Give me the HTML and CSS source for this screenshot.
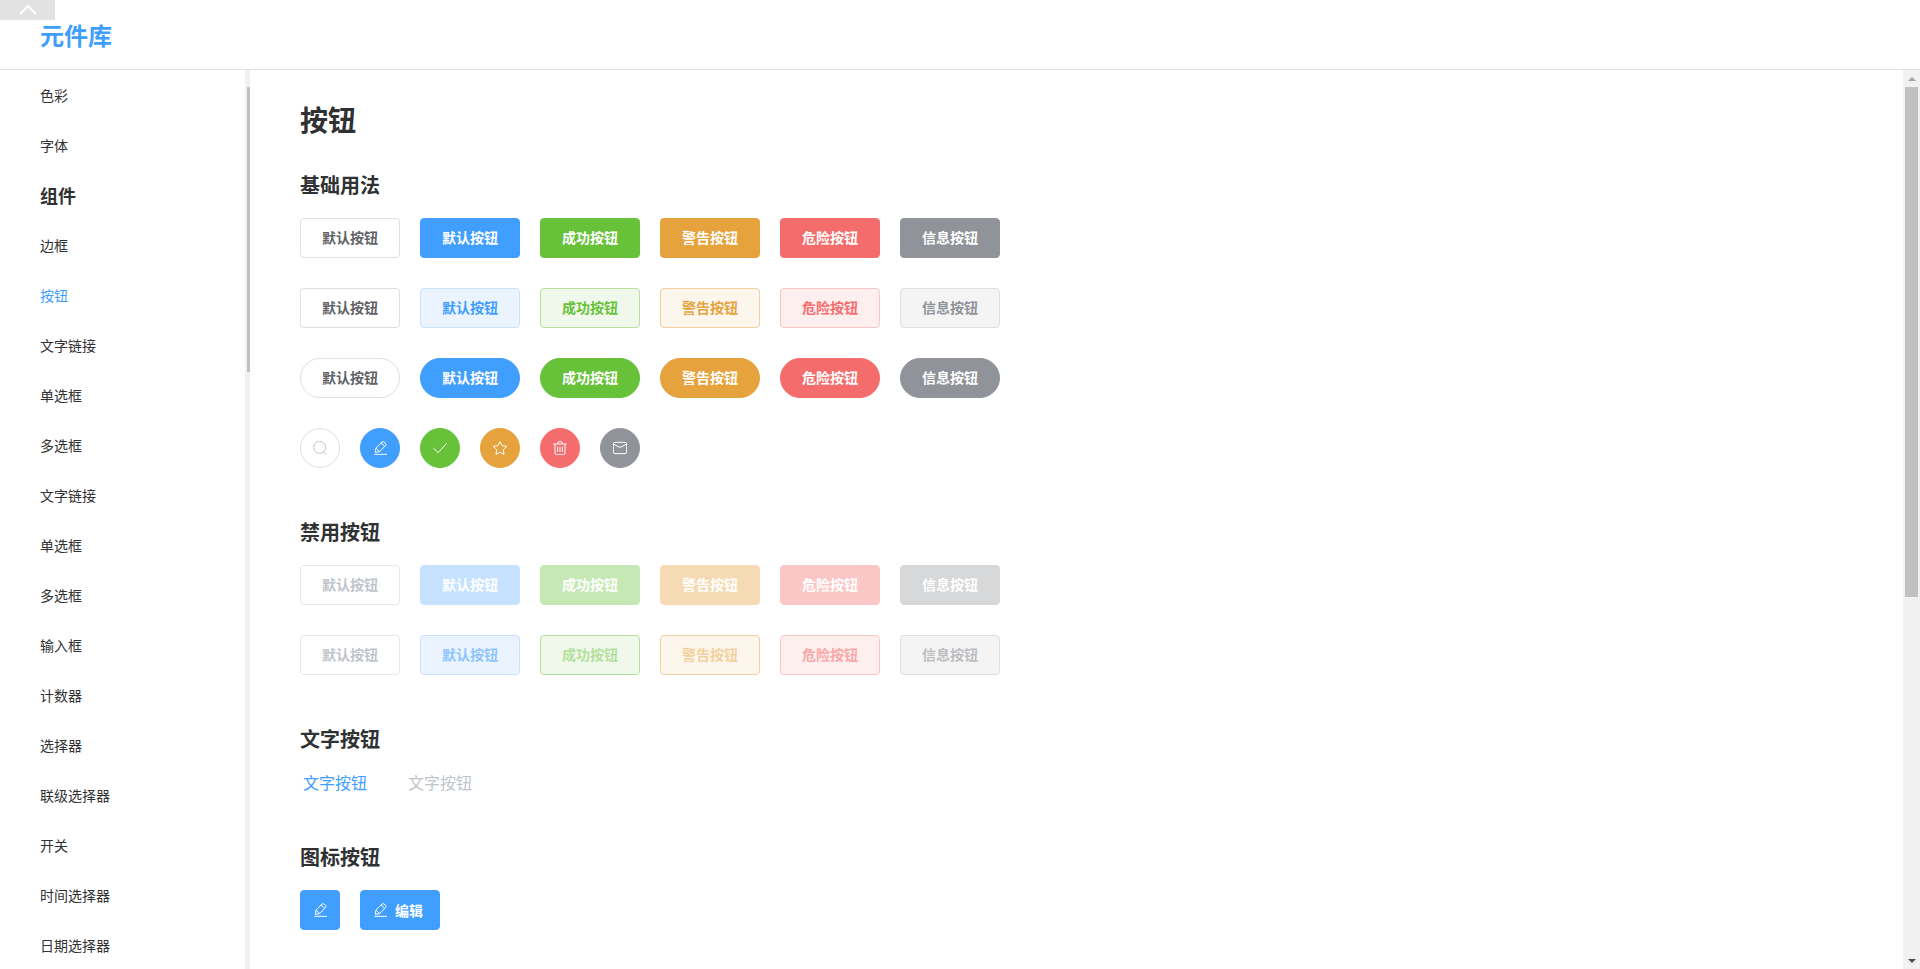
FILE: index.html
```html
<!DOCTYPE html>
<html lang="zh-CN">
  <head>
    <meta charset="UTF-8" />
    <meta name="viewport" content="width=device-width, initial-scale=1.0" />
    <title>元件库</title>
    <link rel="stylesheet" href="styles.css">
  </head>
  <body>
    <svg class="icon-defs" aria-hidden="true">
      <symbol id="icon-search" viewBox="0 0 42 42">
        <circle cx="20" cy="19" r="18" />
        <path d="M33 32l9 9" />
      </symbol>
      <symbol id="icon-edit" viewBox="0 0 42 42">
        <path d="M4 40h38M7 34l2-13L27 3q3-2 6 0l5 4q2 3 0 6L20 32zM9 21l11 11M24 6l11 10" />
      </symbol>
      <symbol id="icon-check" viewBox="0 0 42 42">
        <path d="M1 21l14 14L41 7" />
      </symbol>
      <symbol id="icon-star" viewBox="0 0 42 42">
        <path d="M21 2l6 12 14 2-10 10 2 14-12-6-12 6 2-14L1 16l14-2z" />
      </symbol>
      <symbol id="icon-delete" viewBox="0 0 42 42">
        <path d="M1 9h40M14 9V5q0-3 3-3h8q3 0 3 3v4M6 9v27q0 5 5 5h20q5 0 5-5V9M14 17v16M21 17v16M28 17v16" />
      </symbol>
      <symbol id="icon-message" viewBox="0 0 42 42">
        <rect x="1" y="4" width="40" height="34" rx="5" />
        <path d="M2 9l13 8q6 3 12 0l13-8" />
      </symbol>
    </svg>

    <header class="header">
      <h1 class="logo">元件库</h1>
      <button class="collapse" type="button" aria-label="收起">
        <svg width="18" height="10" viewBox="0 0 18 10"><path d="M1 9l8-8 8 8" /></svg>
      </button>
    </header>

    <div class="layout">
      <aside class="sidebar">
        <nav class="menu">
          <a href="#">色彩</a>
          <a href="#">字体</a>
          <h2 class="menu-title">组件</h2>
          <a href="#">边框</a>
          <a href="#" class="active">按钮</a>
          <a href="#">文字链接</a>
          <a href="#">单选框</a>
          <a href="#">多选框</a>
          <a href="#">文字链接</a>
          <a href="#">单选框</a>
          <a href="#">多选框</a>
          <a href="#">输入框</a>
          <a href="#">计数器</a>
          <a href="#">选择器</a>
          <a href="#">联级选择器</a>
          <a href="#">开关</a>
          <a href="#">时间选择器</a>
          <a href="#">日期选择器</a>
        </nav>
        <div class="side-scroll"><div class="side-thumb"></div></div>
      </aside>

      <main class="content">
        <h2 class="page-title">按钮</h2>

        <section>
          <h3>基础用法</h3>
          <div class="row">
            <button class="btn">默认按钮</button>
            <button class="btn primary">默认按钮</button>
            <button class="btn success">成功按钮</button>
            <button class="btn warning">警告按钮</button>
            <button class="btn danger">危险按钮</button>
            <button class="btn info">信息按钮</button>
          </div>
          <div class="row">
            <button class="btn">默认按钮</button>
            <button class="btn primary plain">默认按钮</button>
            <button class="btn success plain">成功按钮</button>
            <button class="btn warning plain">警告按钮</button>
            <button class="btn danger plain">危险按钮</button>
            <button class="btn info plain">信息按钮</button>
          </div>
          <div class="row">
            <button class="btn round">默认按钮</button>
            <button class="btn primary round">默认按钮</button>
            <button class="btn success round">成功按钮</button>
            <button class="btn warning round">警告按钮</button>
            <button class="btn danger round">危险按钮</button>
            <button class="btn info round">信息按钮</button>
          </div>
          <div class="row">
            <button class="btn circle search" aria-label="搜索"><svg class="icon"><use href="#icon-search" /></svg></button>
            <button class="btn primary circle" aria-label="编辑"><svg class="icon"><use href="#icon-edit" /></svg></button>
            <button class="btn success circle" aria-label="确定"><svg class="icon"><use href="#icon-check" /></svg></button>
            <button class="btn warning circle" aria-label="收藏"><svg class="icon"><use href="#icon-star" /></svg></button>
            <button class="btn danger circle" aria-label="删除"><svg class="icon"><use href="#icon-delete" /></svg></button>
            <button class="btn info circle" aria-label="邮件"><svg class="icon"><use href="#icon-message" /></svg></button>
          </div>
        </section>

        <section>
          <h3>禁用按钮</h3>
          <div class="row">
            <button class="btn" disabled>默认按钮</button>
            <button class="btn primary" disabled>默认按钮</button>
            <button class="btn success" disabled>成功按钮</button>
            <button class="btn warning" disabled>警告按钮</button>
            <button class="btn danger" disabled>危险按钮</button>
            <button class="btn info" disabled>信息按钮</button>
          </div>
          <div class="row">
            <button class="btn" disabled>默认按钮</button>
            <button class="btn primary plain" disabled>默认按钮</button>
            <button class="btn success plain" disabled>成功按钮</button>
            <button class="btn warning plain" disabled>警告按钮</button>
            <button class="btn danger plain" disabled>危险按钮</button>
            <button class="btn info plain" disabled>信息按钮</button>
          </div>
        </section>

        <section>
          <h3>文字按钮</h3>
          <div class="row text-row">
            <button class="btn-text">文字按钮</button>
            <button class="btn-text" disabled>文字按钮</button>
          </div>
        </section>

        <section>
          <h3>图标按钮</h3>
          <div class="row">
            <button class="btn primary square" aria-label="编辑"><svg class="icon"><use href="#icon-edit" /></svg></button>
            <button class="btn primary with-icon"><svg class="icon"><use href="#icon-edit" /></svg>编辑</button>
          </div>
        </section>
      </main>

      <div class="scrollbar">
        <div class="arrow up"></div>
        <div class="track"><div class="thumb"></div></div>
        <div class="arrow down"></div>
      </div>
    </div>
  </body>
</html>
```
FILE: styles.css
```css
* {
  box-sizing: border-box;
}

body {
  margin: 0;
  height: 100vh;
  display: flex;
  flex-direction: column;
  overflow: hidden;
  font-family: "Noto Sans CJK SC", sans-serif;
  font-size: 14px;
  color: #303133;
  background-color: #fff;
}

h1,
h2,
h3 {
  margin: 0;
}

button {
  font-family: inherit;
  cursor: pointer;
}

button:disabled {
  cursor: not-allowed;
}

.icon-defs {
  display: none;
}

/* header */
.header {
  position: relative;
  flex: none;
  height: 70px;
  padding: 0 40px;
  border-bottom: 1px solid #e0e0e0;
}

.logo {
  font-size: 24px;
  line-height: 70px;
  color: #409eff;
}

.collapse {
  position: absolute;
  top: 0;
  left: 0;
  width: 55px;
  height: 20px;
  padding: 0;
  border: none;
  background-color: #e2e2e2;
  display: flex;
  align-items: center;
  justify-content: center;
}

.collapse svg {
  fill: none;
  stroke: #fff;
  stroke-width: 2;
}

/* layout */
.layout {
  flex: 1;
  min-height: 0;
  display: flex;
}

.sidebar {
  flex: none;
  width: 250px;
  display: flex;
  overflow: hidden;
}

.menu {
  flex: 1;
  padding-left: 40px;
}

.menu a {
  display: block;
  line-height: 50px;
  color: #303133;
  text-decoration: none;
}

.menu a.active {
  color: #409eff;
}

.menu-title {
  font-size: 18px;
  line-height: 50px;
}

.side-scroll {
  width: 5px;
  height: 100%;
  padding: 17px 0 17px 2px;
  background-color: #f1f1f1;
}

.side-thumb {
  height: 33%;
  background-color: #c1c1c1;
}

.scrollbar {
  flex: none;
  width: 17px;
  display: flex;
  flex-direction: column;
  background-color: #f1f1f1;
}

.arrow {
  height: 17px;
  display: flex;
  align-items: center;
  justify-content: center;
}

.arrow::before {
  content: "";
  border: 4px solid transparent;
}

.arrow.up::before {
  border-top: none;
  border-bottom-color: #a3a3a3;
}

.arrow.down::before {
  border-bottom: none;
  border-top-color: #505050;
}

.track {
  flex: 1;
  padding: 0 2px;
}

.thumb {
  height: 59%;
  background-color: #c1c1c1;
}

/* content */
.content {
  flex: 1;
  padding: 30px 50px;
  overflow: hidden;
}

.page-title {
  margin-bottom: 34px;
  font-size: 28px;
  line-height: 38px;
}

section {
  margin-bottom: 51px;
}

section h3 {
  margin-bottom: 20px;
  font-size: 20px;
  line-height: 26px;
}

.row {
  display: flex;
  gap: 20px;
}

.row + .row {
  margin-top: 30px;
}

/* buttons */
.btn {
  width: 100px;
  height: 40px;
  padding: 0 0 2px;
  display: flex;
  align-items: center;
  justify-content: center;
  border: 1px solid #dcdfe6;
  border-radius: 4px;
  background-color: #fff;
  color: #606266;
  font-size: 14px;
  font-weight: bold;
}

.btn:disabled {
  border-color: #e4e7ed;
  color: #c0c4cc;
}

.btn.primary {
  border-color: #409eff;
  background-color: #409eff;
  color: #fff;
}

.btn.success {
  border-color: #67c23a;
  background-color: #67c23a;
  color: #fff;
}

.btn.warning {
  border-color: #e6a23c;
  background-color: #e6a23c;
  color: #fff;
}

.btn.danger {
  border-color: #f56c6c;
  background-color: #f56c6c;
  color: #fff;
}

.btn.info {
  border-color: #909399;
  background-color: #909399;
  color: #fff;
}

.btn.primary:disabled {
  border-color: #c6e2ff;
  background-color: #c6e2ff;
}

.btn.success:disabled {
  border-color: #c5e8b4;
  background-color: #c5e8b4;
}

.btn.warning:disabled {
  border-color: #f5dab4;
  background-color: #f5dab4;
}

.btn.danger:disabled {
  border-color: #fbc6c6;
  background-color: #fbc6c6;
}

.btn.info:disabled {
  border-color: #d7d8da;
  background-color: #d7d8da;
}

.btn.primary.plain {
  border-color: #c6e2ff;
  background-color: #ebf3ff;
  color: #409eff;
}

.btn.success.plain {
  border-color: #b3e19d;
  background-color: #f0f8eb;
  color: #67c23a;
}

.btn.warning.plain {
  border-color: #f3d19e;
  background-color: #fdf6ec;
  color: #e6a23c;
}

.btn.danger.plain {
  border-color: #fbc4c4;
  background-color: #feefef;
  color: #f56c6c;
}

.btn.info.plain {
  border-color: #dcdfe6;
  background-color: #f4f4f4;
  color: #909399;
}

.btn.primary.plain:disabled {
  color: #8cc5ff;
}

.btn.success.plain:disabled {
  color: #b3e19d;
}

.btn.warning.plain:disabled {
  color: #f3d19e;
}

.btn.danger.plain:disabled {
  color: #f9a7a7;
}

.btn.info.plain:disabled {
  color: #bcbec2;
}

.btn.round {
  border-radius: 20px;
}

.btn.circle {
  width: 40px;
  padding: 0;
  border-radius: 50%;
}

.btn.search {
  color: #c0c4cc;
}

.btn.square {
  width: 40px;
  padding: 0;
}

.btn.with-icon {
  width: 80px;
  padding: 0 0 0 12px;
  justify-content: flex-start;
  gap: 8px;
}

.icon {
  width: 14px;
  height: 14px;
  overflow: visible;
  fill: none;
  stroke: currentColor;
  stroke-width: 3;
  stroke-linejoin: round;
}

.text-row {
  gap: 35px;
}

.btn-text {
  padding: 0 3px;
  border: none;
  background: none;
  font-size: 16px;
  line-height: 21px;
  color: #409eff;
}

.btn-text:disabled {
  color: #c0c4cc;
}
```
